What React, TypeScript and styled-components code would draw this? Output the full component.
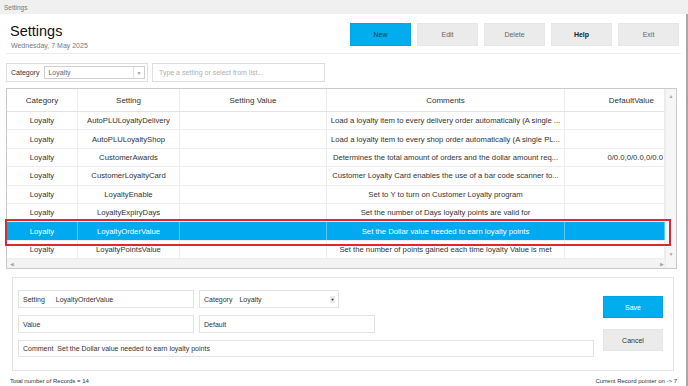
import React from "react";
import styled, { createGlobalStyle } from "styled-components";

const GlobalStyle = createGlobalStyle`
  html, body {
    margin: 0;
    padding: 0;
    background: #ffffff;
  }
  body {
    font-family: "Liberation Sans", Arial, sans-serif;
    color: #333;
  }
`;

const Window = styled.div`
  width: 688px;
  height: 386px;
  overflow: hidden;
  background: #fff;
  display: flex;
  flex-direction: column;
`;

const TitleBar = styled.div`
  height: 14px;
  background: #f0f0f0;
  font-size: 6.5px;
  color: #777;
  display: flex;
  align-items: center;
  padding-left: 4px;
  flex-shrink: 0;
`;

const Main = styled.div`
  flex: 1;
  border-right: 2px solid #a8a8a8;
  display: flex;
  flex-direction: column;
`;

const HeaderBar = styled.div`
  display: flex;
  justify-content: space-between;
  align-items: flex-start;
  height: 39px;
  margin: 0 5px 0 6px;
  border-bottom: 1px solid #ececec;
`;

const TitleBlock = styled.div`
  padding: 9px 0 0 4px;
`;

const Title = styled.div`
  font-size: 14.5px;
  line-height: 17px;
  color: #111;
`;

const DateLine = styled.div`
  font-size: 7px;
  line-height: 9px;
  color: #777;
  margin: 1px 0 0 1px;
`;

const ButtonsRow = styled.div`
  display: flex;
  gap: 6px;
  padding: 9px 2px 0 0;
`;

const ActionButton = styled.button<{ $primary?: boolean; $strong?: boolean }>`
  width: 61px;
  height: 23px;
  border: 1px solid ${(p) => (p.$primary ? "#00a3e6" : "#e6e6e6")};
  background: ${(p) => (p.$primary ? "#00aef0" : "#ebebeb")};
  color: ${(p) => (p.$primary ? "#1d3b57" : p.$strong ? "#222" : "#666")};
  font-family: "Liberation Sans", Arial, sans-serif;
  font-size: 7px;
  font-weight: ${(p) => (p.$strong ? 700 : 400)};
  padding: 0;
  cursor: pointer;
`;

const FilterRow = styled.div`
  display: flex;
  gap: 4px;
  height: 19px;
  margin: 9px 0 0 6px;
`;

const FilterBox = styled.div`
  width: 142px;
  box-sizing: border-box;
  border: 1px solid #dedede;
  display: flex;
  align-items: center;
  padding: 0 2px 0 4px;
  font-size: 7px;
  color: #333;
`;

const SelectBox = styled.div`
  flex: 1;
  height: 13px;
  margin-left: 5px;
  box-sizing: border-box;
  border: 1px solid #cfcfcf;
  display: flex;
  align-items: center;
  justify-content: space-between;
  padding-left: 3px;
  color: #666;
`;

const SelectArrow = styled.div`
  width: 10px;
  height: 100%;
  border-left: 1px solid #e2e2e2;
  display: flex;
  align-items: center;
  justify-content: center;
  font-size: 5px;
  color: #999;
`;

const SearchBox = styled.div`
  width: 173px;
  box-sizing: border-box;
  border: 1px solid #dedede;
  display: flex;
  align-items: center;
  padding-left: 6px;
  font-size: 7px;
  color: #b0b0b0;
`;

const TablePanel = styled.div`
  position: relative;
  margin: 6px 9px 0 6px;
  height: 181px;
  box-sizing: border-box;
  border: 1px solid #c9c9c9;
  display: grid;
  grid-template-columns: 1fr 11px;
  grid-template-rows: 1fr 9px;
`;

const Viewport = styled.div`
  overflow: hidden;
`;

const columns = "71px 102px 147px 238px 1fr";

const GridRow = styled.div<{ $head?: boolean; $selected?: boolean }>`
  display: grid;
  grid-template-columns: ${columns};
  height: ${(p) => (p.$head ? "23px" : "18.4px")};
  box-sizing: border-box;
  border-bottom: 1px solid ${(p) => (p.$head ? "#e2e2e2" : "#ededed")};
  background: ${(p) => (p.$selected ? "#00aaf0" : "#fff")};
  color: ${(p) => (p.$selected ? "#fff" : "#333")};
  font-size: ${(p) => (p.$head ? "8px" : "7.7px")};
`;

const Cell = styled.div<{ $selected?: boolean; $end?: number }>`
  display: flex;
  align-items: center;
  justify-content: ${(p) => (p.$end !== undefined ? "flex-end" : "center")};
  padding: 0 ${(p) => p.$end ?? 1}px 0 1px;
  border-right: 1px solid
    ${(p) => (p.$selected ? "rgba(255,255,255,0.35)" : "#ececec")};
  min-width: 0;
  overflow: hidden;
`;

const CellText = styled.span`
  white-space: nowrap;
  text-align: center;
`;

const VScroll = styled.div`
  grid-row: 1 / span 2;
  grid-column: 2;
  background: #f6f6f6;
  border-left: 1px solid #ececec;
  display: flex;
  flex-direction: column;
  justify-content: space-between;
  align-items: center;
  padding: 4px 0 11px;
  font-size: 5px;
  color: #a8a8a8;
`;

const HScroll = styled.div`
  background: #f3f3f3;
  display: flex;
  justify-content: space-between;
  align-items: center;
  padding: 0 1px 0 3px;
  font-size: 5px;
  color: #a8a8a8;
`;

const Highlight = styled.div`
  position: absolute;
  left: -2px;
  top: 130px;
  width: 666px;
  height: 27px;
  box-sizing: border-box;
  border: 2px solid #e3262b;
  pointer-events: none;
`;

const FormPanel = styled.div`
  margin: 8px 12px 0 12px;
  height: 94px;
  box-sizing: border-box;
  border: 1px solid #e4e4e4;
  padding: 12px 0 0 5px;
  display: flex;
`;

const Fields = styled.div`
  width: 576px;
  display: flex;
  flex-direction: column;
  gap: 7px;
`;

const FieldRow = styled.div`
  display: flex;
  gap: 5px;
`;

const Field = styled.div<{ $w: number; $h?: number }>`
  width: ${(p) => p.$w}px;
  height: ${(p) => p.$h ?? 18}px;
  box-sizing: border-box;
  border: 1px solid #e2e2e2;
  display: flex;
  align-items: center;
  padding: 0 3px 0 4px;
  font-size: 7px;
  color: #333;
`;

const FieldLabel = styled.span<{ $gap: number }>`
  margin-right: ${(p) => p.$gap}px;
`;

const FieldValue = styled.span`
  flex: 1;
  color: #333;
`;

const MiniArrow = styled.span`
  width: 5px;
  height: 7px;
  background: #eaeaea;
  font-size: 4px;
  color: #222;
  display: flex;
  align-items: center;
  justify-content: center;
`;

const SideButtons = styled.div`
  margin-left: 9px;
  padding-top: 6px;
  display: flex;
  flex-direction: column;
  gap: 11px;
`;

const FormButton = styled.button<{ $primary?: boolean }>`
  width: 60px;
  height: 22px;
  border: 1px solid ${(p) => (p.$primary ? "#00a3e6" : "#e6e6e6")};
  background: ${(p) => (p.$primary ? "#00aef0" : "#ebebeb")};
  color: ${(p) => (p.$primary ? "#fff" : "#333")};
  font-family: "Liberation Sans", Arial, sans-serif;
  font-size: 7px;
  padding: 0;
`;

const Footer = styled.div`
  display: flex;
  justify-content: space-between;
  align-items: center;
  padding: 5px 9px 0 10px;
  height: 15px;
  box-sizing: border-box;
  font-size: 6px;
  color: #333;
`;

type Row = {
  setting: string;
  comment: string;
  def?: string;
};

// comments are shown the way the grid trims them
const rows: Row[] = [
  {
    setting: "AutoPLULoyaltyDelivery",
    comment:
      "Load a loyalty item to every delivery order automatically (A single ...",
  },
  {
    setting: "AutoPLULoyaltyShop",
    comment: "Load a loyalty item to every shop order automatically (A single PL...",
  },
  {
    setting: "CustomerAwards",
    comment: "Determines the total amount of orders and the dollar amount req...",
    def: "0/0.0,0/0.0,0/0.0",
  },
  {
    setting: "CustomerLoyaltyCard",
    comment: "Customer Loyalty Card enables the use of a bar code scanner to...",
  },
  {
    setting: "LoyaltyEnable",
    comment: "Set to Y to turn on Customer Loyalty program",
  },
  {
    setting: "LoyaltyExpiryDays",
    comment: "Set the number of Days loyalty points are valid for",
  },
  {
    setting: "LoyaltyOrderValue",
    comment: "Set the Dollar value needed to earn loyalty points",
  },
  {
    setting: "LoyaltyPointsValue",
    comment: "Set the number of points gained each time loyalty Value is met",
  },
];

const selectedIndex = 6;

const App = () => {
  return (
    <>
      <GlobalStyle />
      <Window>
        <TitleBar>Settings</TitleBar>
        <Main>
          <HeaderBar>
            <TitleBlock>
              <Title>Settings</Title>
              <DateLine>Wednesday, 7 May 2025</DateLine>
            </TitleBlock>
            <ButtonsRow>
              <ActionButton $primary>New</ActionButton>
              <ActionButton>Edit</ActionButton>
              <ActionButton>Delete</ActionButton>
              <ActionButton $strong>Help</ActionButton>
              <ActionButton>Exit</ActionButton>
            </ButtonsRow>
          </HeaderBar>

          <FilterRow>
            <FilterBox>
              Category
              <SelectBox>
                Loyalty
                <SelectArrow>▼</SelectArrow>
              </SelectBox>
            </FilterBox>
            <SearchBox>Type a setting or select from list...</SearchBox>
          </FilterRow>

          <TablePanel>
            <Viewport>
              <GridRow $head>
                <Cell>Category</Cell>
                <Cell>Setting</Cell>
                <Cell>Setting Value</Cell>
                <Cell>Comments</Cell>
                <Cell $end={10}>DefaultValue</Cell>
              </GridRow>
              {rows.map((r, i) => {
                const sel = i === selectedIndex;
                return (
                  <GridRow key={r.setting} $selected={sel}>
                    <Cell $selected={sel}>
                      <CellText>Loyalty</CellText>
                    </Cell>
                    <Cell $selected={sel}>
                      <CellText>{r.setting}</CellText>
                    </Cell>
                    <Cell $selected={sel} />
                    <Cell $selected={sel}>
                      <CellText>{r.comment}</CellText>
                    </Cell>
                    <Cell $selected={sel} $end={1}>
                      <CellText>{r.def ?? ""}</CellText>
                    </Cell>
                  </GridRow>
                );
              })}
            </Viewport>
            <VScroll>
              <span>▲</span>
              <span>▼</span>
            </VScroll>
            <HScroll>
              <span>◀</span>
              <span>▶</span>
            </HScroll>
            <Highlight />
          </TablePanel>

          <FormPanel>
            <Fields>
              <FieldRow>
                <Field $w={176}>
                  <FieldLabel $gap={11}>Setting</FieldLabel>
                  <FieldValue>LoyaltyOrderValue</FieldValue>
                </Field>
                <Field $w={140}>
                  <FieldLabel $gap={7}>Category</FieldLabel>
                  <FieldValue>Loyalty</FieldValue>
                  <MiniArrow>▼</MiniArrow>
                </Field>
              </FieldRow>
              <FieldRow>
                <Field $w={176}>
                  <FieldLabel $gap={0}>Value</FieldLabel>
                </Field>
                <Field $w={176}>
                  <FieldLabel $gap={0}>Default</FieldLabel>
                </Field>
              </FieldRow>
              <Field $w={576} $h={17}>
                <FieldLabel $gap={4}>Comment</FieldLabel>
                <FieldValue>
                  Set the Dollar value needed to earn loyalty points
                </FieldValue>
              </Field>
            </Fields>
            <SideButtons>
              <FormButton $primary>Save</FormButton>
              <FormButton>Cancel</FormButton>
            </SideButtons>
          </FormPanel>

          <Footer>
            <span>Total number of Records = 14</span>
            <span>Current Record pointer on -&gt; 7</span>
          </Footer>
        </Main>
      </Window>
    </>
  );
};

export default App;
